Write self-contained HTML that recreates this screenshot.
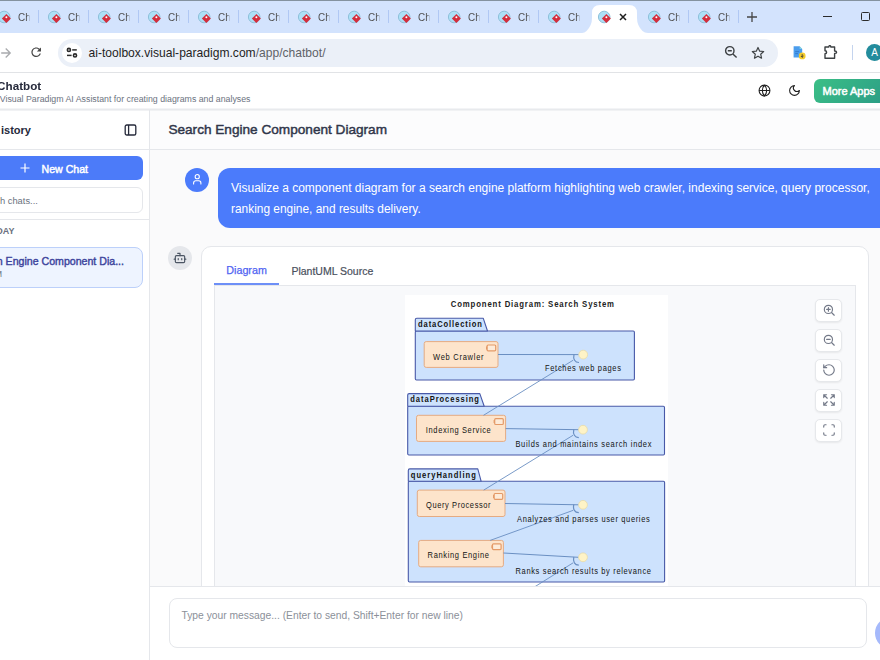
<!DOCTYPE html>
<html><head><meta charset="utf-8">
<style>
*{box-sizing:border-box;margin:0;padding:0}
html,body{width:880px;height:660px;overflow:hidden;background:#fff;font-family:"Liberation Sans",sans-serif;position:relative}
.a{position:absolute}
.t{position:absolute;line-height:1;white-space:nowrap}
</style></head><body>
<div class="a" style="left:0;top:0;width:880px;height:1px;background:#84929f"></div>
<div class="a" style="left:0;top:1px;width:880px;height:32px;background:#d3e3fd"></div>
<svg class="a" style="left:582px;top:4px" width="66" height="30" viewBox="0 0 66 30">
<path d="M0 29 Q2.5 29 4.5 27 Q10 21.5 10 14 L10 9 Q10 1 18 1 L47 1 Q55 1 55 9 L55 14 Q55 21.5 60.5 27 Q62.5 29 66 29 L66 30 L0 30 Z" fill="#fff"/></svg>
<svg class="a" style="left:-3.2px;top:9.5px" width="14" height="14" viewBox="0 0 14 14"><circle cx="7.2" cy="7" r="5.8" fill="#ade0f7" stroke="#88bcd6" stroke-width="0.9"/><path d="M9.4 4.1 L13.9 8.6 L9.4 13.1 L4.9 8.6 Z" fill="#d42d3c"/><circle cx="9.4" cy="7.2" r="1.0" fill="#fff"/></svg>
<div class="t" style="left:17.70px;top:11.79px;font-size:11px;color:#505050;transform:scaleX(0.9);transform-origin:left center;width:14.5px;overflow:hidden;-webkit-mask-image:linear-gradient(90deg,#000 66%,transparent 92%);">Ch</div>
<div class="a" style="left:37.9px;top:10px;width:1.6px;height:13px;background:#b0c8f4"></div>
<svg class="a" style="left:46.8px;top:9.5px" width="14" height="14" viewBox="0 0 14 14"><circle cx="7.2" cy="7" r="5.8" fill="#ade0f7" stroke="#88bcd6" stroke-width="0.9"/><path d="M9.4 4.1 L13.9 8.6 L9.4 13.1 L4.9 8.6 Z" fill="#d42d3c"/><circle cx="9.4" cy="7.2" r="1.0" fill="#fff"/></svg>
<div class="t" style="left:67.70px;top:11.79px;font-size:11px;color:#505050;transform:scaleX(0.9);transform-origin:left center;width:14.5px;overflow:hidden;-webkit-mask-image:linear-gradient(90deg,#000 66%,transparent 92%);">Ch</div>
<div class="a" style="left:87.9px;top:10px;width:1.6px;height:13px;background:#b0c8f4"></div>
<svg class="a" style="left:96.8px;top:9.5px" width="14" height="14" viewBox="0 0 14 14"><circle cx="7.2" cy="7" r="5.8" fill="#ade0f7" stroke="#88bcd6" stroke-width="0.9"/><path d="M9.4 4.1 L13.9 8.6 L9.4 13.1 L4.9 8.6 Z" fill="#d42d3c"/><circle cx="9.4" cy="7.2" r="1.0" fill="#fff"/></svg>
<div class="t" style="left:117.70px;top:11.79px;font-size:11px;color:#505050;transform:scaleX(0.9);transform-origin:left center;width:14.5px;overflow:hidden;-webkit-mask-image:linear-gradient(90deg,#000 66%,transparent 92%);">Ch</div>
<div class="a" style="left:137.9px;top:10px;width:1.6px;height:13px;background:#b0c8f4"></div>
<svg class="a" style="left:146.8px;top:9.5px" width="14" height="14" viewBox="0 0 14 14"><circle cx="7.2" cy="7" r="5.8" fill="#ade0f7" stroke="#88bcd6" stroke-width="0.9"/><path d="M9.4 4.1 L13.9 8.6 L9.4 13.1 L4.9 8.6 Z" fill="#d42d3c"/><circle cx="9.4" cy="7.2" r="1.0" fill="#fff"/></svg>
<div class="t" style="left:167.70px;top:11.79px;font-size:11px;color:#505050;transform:scaleX(0.9);transform-origin:left center;width:14.5px;overflow:hidden;-webkit-mask-image:linear-gradient(90deg,#000 66%,transparent 92%);">Ch</div>
<div class="a" style="left:187.9px;top:10px;width:1.6px;height:13px;background:#b0c8f4"></div>
<svg class="a" style="left:196.8px;top:9.5px" width="14" height="14" viewBox="0 0 14 14"><circle cx="7.2" cy="7" r="5.8" fill="#ade0f7" stroke="#88bcd6" stroke-width="0.9"/><path d="M9.4 4.1 L13.9 8.6 L9.4 13.1 L4.9 8.6 Z" fill="#d42d3c"/><circle cx="9.4" cy="7.2" r="1.0" fill="#fff"/></svg>
<div class="t" style="left:217.70px;top:11.79px;font-size:11px;color:#505050;transform:scaleX(0.9);transform-origin:left center;width:14.5px;overflow:hidden;-webkit-mask-image:linear-gradient(90deg,#000 66%,transparent 92%);">Ch</div>
<div class="a" style="left:237.9px;top:10px;width:1.6px;height:13px;background:#b0c8f4"></div>
<svg class="a" style="left:246.8px;top:9.5px" width="14" height="14" viewBox="0 0 14 14"><circle cx="7.2" cy="7" r="5.8" fill="#ade0f7" stroke="#88bcd6" stroke-width="0.9"/><path d="M9.4 4.1 L13.9 8.6 L9.4 13.1 L4.9 8.6 Z" fill="#d42d3c"/><circle cx="9.4" cy="7.2" r="1.0" fill="#fff"/></svg>
<div class="t" style="left:267.70px;top:11.79px;font-size:11px;color:#505050;transform:scaleX(0.9);transform-origin:left center;width:14.5px;overflow:hidden;-webkit-mask-image:linear-gradient(90deg,#000 66%,transparent 92%);">Ch</div>
<div class="a" style="left:287.9px;top:10px;width:1.6px;height:13px;background:#b0c8f4"></div>
<svg class="a" style="left:296.8px;top:9.5px" width="14" height="14" viewBox="0 0 14 14"><circle cx="7.2" cy="7" r="5.8" fill="#ade0f7" stroke="#88bcd6" stroke-width="0.9"/><path d="M9.4 4.1 L13.9 8.6 L9.4 13.1 L4.9 8.6 Z" fill="#d42d3c"/><circle cx="9.4" cy="7.2" r="1.0" fill="#fff"/></svg>
<div class="t" style="left:317.70px;top:11.79px;font-size:11px;color:#505050;transform:scaleX(0.9);transform-origin:left center;width:14.5px;overflow:hidden;-webkit-mask-image:linear-gradient(90deg,#000 66%,transparent 92%);">Ch</div>
<div class="a" style="left:337.9px;top:10px;width:1.6px;height:13px;background:#b0c8f4"></div>
<svg class="a" style="left:346.8px;top:9.5px" width="14" height="14" viewBox="0 0 14 14"><circle cx="7.2" cy="7" r="5.8" fill="#ade0f7" stroke="#88bcd6" stroke-width="0.9"/><path d="M9.4 4.1 L13.9 8.6 L9.4 13.1 L4.9 8.6 Z" fill="#d42d3c"/><circle cx="9.4" cy="7.2" r="1.0" fill="#fff"/></svg>
<div class="t" style="left:367.70px;top:11.79px;font-size:11px;color:#505050;transform:scaleX(0.9);transform-origin:left center;width:14.5px;overflow:hidden;-webkit-mask-image:linear-gradient(90deg,#000 66%,transparent 92%);">Ch</div>
<div class="a" style="left:387.9px;top:10px;width:1.6px;height:13px;background:#b0c8f4"></div>
<svg class="a" style="left:396.8px;top:9.5px" width="14" height="14" viewBox="0 0 14 14"><circle cx="7.2" cy="7" r="5.8" fill="#ade0f7" stroke="#88bcd6" stroke-width="0.9"/><path d="M9.4 4.1 L13.9 8.6 L9.4 13.1 L4.9 8.6 Z" fill="#d42d3c"/><circle cx="9.4" cy="7.2" r="1.0" fill="#fff"/></svg>
<div class="t" style="left:417.70px;top:11.79px;font-size:11px;color:#505050;transform:scaleX(0.9);transform-origin:left center;width:14.5px;overflow:hidden;-webkit-mask-image:linear-gradient(90deg,#000 66%,transparent 92%);">Ch</div>
<div class="a" style="left:437.9px;top:10px;width:1.6px;height:13px;background:#b0c8f4"></div>
<svg class="a" style="left:446.8px;top:9.5px" width="14" height="14" viewBox="0 0 14 14"><circle cx="7.2" cy="7" r="5.8" fill="#ade0f7" stroke="#88bcd6" stroke-width="0.9"/><path d="M9.4 4.1 L13.9 8.6 L9.4 13.1 L4.9 8.6 Z" fill="#d42d3c"/><circle cx="9.4" cy="7.2" r="1.0" fill="#fff"/></svg>
<div class="t" style="left:467.70px;top:11.79px;font-size:11px;color:#505050;transform:scaleX(0.9);transform-origin:left center;width:14.5px;overflow:hidden;-webkit-mask-image:linear-gradient(90deg,#000 66%,transparent 92%);">Ch</div>
<div class="a" style="left:487.9px;top:10px;width:1.6px;height:13px;background:#b0c8f4"></div>
<svg class="a" style="left:496.8px;top:9.5px" width="14" height="14" viewBox="0 0 14 14"><circle cx="7.2" cy="7" r="5.8" fill="#ade0f7" stroke="#88bcd6" stroke-width="0.9"/><path d="M9.4 4.1 L13.9 8.6 L9.4 13.1 L4.9 8.6 Z" fill="#d42d3c"/><circle cx="9.4" cy="7.2" r="1.0" fill="#fff"/></svg>
<div class="t" style="left:517.70px;top:11.79px;font-size:11px;color:#505050;transform:scaleX(0.9);transform-origin:left center;width:14.5px;overflow:hidden;-webkit-mask-image:linear-gradient(90deg,#000 66%,transparent 92%);">Ch</div>
<div class="a" style="left:537.9px;top:10px;width:1.6px;height:13px;background:#b0c8f4"></div>
<svg class="a" style="left:546.8px;top:9.5px" width="14" height="14" viewBox="0 0 14 14"><circle cx="7.2" cy="7" r="5.8" fill="#ade0f7" stroke="#88bcd6" stroke-width="0.9"/><path d="M9.4 4.1 L13.9 8.6 L9.4 13.1 L4.9 8.6 Z" fill="#d42d3c"/><circle cx="9.4" cy="7.2" r="1.0" fill="#fff"/></svg>
<div class="t" style="left:567.70px;top:11.79px;font-size:11px;color:#505050;transform:scaleX(0.9);transform-origin:left center;width:14.5px;overflow:hidden;-webkit-mask-image:linear-gradient(90deg,#000 66%,transparent 92%);">Ch</div>
<svg class="a" style="left:596.8px;top:9.5px" width="14" height="14" viewBox="0 0 14 14"><circle cx="7.2" cy="7" r="5.8" fill="#ade0f7" stroke="#88bcd6" stroke-width="0.9"/><path d="M9.4 4.1 L13.9 8.6 L9.4 13.1 L4.9 8.6 Z" fill="#d42d3c"/><circle cx="9.4" cy="7.2" r="1.0" fill="#fff"/></svg>
<svg class="a" style="left:618.5px;top:12.5px" width="8" height="8" viewBox="0 0 8 8"><path d="M1 1L7 7M7 1L1 7" stroke="#1f1f1f" stroke-width="1.5"/></svg>
<svg class="a" style="left:646.8px;top:9.5px" width="14" height="14" viewBox="0 0 14 14"><circle cx="7.2" cy="7" r="5.8" fill="#ade0f7" stroke="#88bcd6" stroke-width="0.9"/><path d="M9.4 4.1 L13.9 8.6 L9.4 13.1 L4.9 8.6 Z" fill="#d42d3c"/><circle cx="9.4" cy="7.2" r="1.0" fill="#fff"/></svg>
<div class="t" style="left:667.70px;top:11.79px;font-size:11px;color:#505050;transform:scaleX(0.9);transform-origin:left center;width:14.5px;overflow:hidden;-webkit-mask-image:linear-gradient(90deg,#000 66%,transparent 92%);">Ch</div>
<div class="a" style="left:687.9px;top:10px;width:1.6px;height:13px;background:#b0c8f4"></div>
<svg class="a" style="left:696.8px;top:9.5px" width="14" height="14" viewBox="0 0 14 14"><circle cx="7.2" cy="7" r="5.8" fill="#ade0f7" stroke="#88bcd6" stroke-width="0.9"/><path d="M9.4 4.1 L13.9 8.6 L9.4 13.1 L4.9 8.6 Z" fill="#d42d3c"/><circle cx="9.4" cy="7.2" r="1.0" fill="#fff"/></svg>
<div class="t" style="left:717.70px;top:11.79px;font-size:11px;color:#505050;transform:scaleX(0.9);transform-origin:left center;width:14.5px;overflow:hidden;-webkit-mask-image:linear-gradient(90deg,#000 66%,transparent 92%);">Ch</div>
<div class="a" style="left:737.9px;top:10px;width:1.6px;height:13px;background:#b0c8f4"></div>
<svg class="a" style="left:746px;top:11px" width="12" height="12" viewBox="0 0 12 12"><path d="M6 1V11M1 6H11" stroke="#474747" stroke-width="1.3"/></svg>
<div class="a" style="left:822.5px;top:16px;width:9.5px;height:1.2px;background:#2b2b2b"></div>
<div class="a" style="left:861px;top:12.3px;width:9px;height:9px;border:1.3px solid #2b2b2b;border-radius:1.5px"></div>
<div class="a" style="left:0;top:33px;width:880px;height:39px;background:#fff"></div>
<div class="a" style="left:0;top:72px;width:880px;height:1px;background:#e1e3e6"></div>
<svg class="a" style="left:0px;top:45.5px" width="14" height="14" viewBox="0 0 14 14"><path d="M1.2 7H10.2M5.7 2.5L10.2 7L5.7 11.5" fill="none" stroke="#a9abae" stroke-width="1.35"/></svg>
<svg class="a" style="left:28.8px;top:45.4px" width="14.4" height="14.4" viewBox="0 0 24 24"><path fill="#474747" d="M17.65 6.35C16.2 4.9 14.21 4 12 4c-4.42 0-7.99 3.58-7.99 8s3.57 8 7.99 8c3.73 0 6.84-2.55 7.73-6h-2.08c-.82 2.33-3.04 4-5.650 4-3.31 0-6-2.69-6-6s2.69-6 6-6c1.66 0 3.14.69 4.22 1.78L13 11h7V4l-2.35 2.35z"/></svg>
<div class="a" style="left:58px;top:38.5px;width:720px;height:28px;border-radius:14px;background:#ebf0f8"></div>
<div class="a" style="left:61.5px;top:42.5px;width:20px;height:20px;border-radius:10px;background:#fff"></div>
<svg class="a" style="left:65px;top:46px" width="13" height="13" viewBox="0 0 13 13"><circle cx="3.9" cy="3.9" r="1.55" fill="none" stroke="#2b2b2b" stroke-width="1.6"/><path d="M7.2 3.9H11.8" stroke="#2b2b2b" stroke-width="1.5"/><circle cx="10" cy="9.4" r="1.55" fill="none" stroke="#2b2b2b" stroke-width="1.6"/><path d="M2 9.4H6.6" stroke="#2b2b2b" stroke-width="1.5"/></svg>
<div class="t" style="left:88.50px;top:46.77px;font-size:12.08px;color:#1f1f1f;">ai-toolbox.visual-paradigm.com<span style="color:#5f6368">/app/chatbot/</span></div>
<svg class="a" style="left:724px;top:45.3px" width="14" height="14" viewBox="0 0 14 14"><circle cx="5.8" cy="5.8" r="4.2" fill="none" stroke="#3c4043" stroke-width="1.4"/><path d="M3.8 5.8H7.8M8.9 8.9L12.6 12.6" stroke="#3c4043" stroke-width="1.4"/></svg>
<svg class="a" style="left:751px;top:45.6px" width="14" height="14" viewBox="0 0 24 24"><path d="M12 2.5l2.9 6.3 6.9.7-5.2 4.6 1.5 6.8L12 17.4l-6.1 3.5 1.5-6.8L2.2 9.5l6.9-.7z" fill="none" stroke="#3c4043" stroke-width="2" stroke-linejoin="round"/></svg>
<svg class="a" style="left:792px;top:44px" width="16" height="17" viewBox="0 0 16 17"><path d="M1.6 2.3H7.6L10.2 4.9V13.5H1.6Z" fill="#4b9ded"/><path d="M7.6 2.3V4.9H10.2Z" fill="#86d3df"/><path d="M3.2 7.6H7.2M3.2 9.6H6" stroke="#2f74c6" stroke-width="0.8"/><circle cx="10.2" cy="11.9" r="3.4" fill="#f3cb2c"/><path d="M10.2 10.2V13.2M8.9 12L10.2 13.3L11.5 12" fill="none" stroke="#3a3a3a" stroke-width="0.9"/></svg>
<svg class="a" style="left:823.5px;top:45px" width="15" height="14" viewBox="0 0 15 14"><path d="M1 2H4.8Q4.8 0.6 5.8 0.6Q6.8 0.6 6.8 2H10.6V6Q12.6 6 12.6 7.2Q12.6 8.4 10.6 8.4V13.2H1V8.7Q2.6 8.7 2.6 7.2Q2.6 5.7 1 5.7Z" fill="none" stroke="#3c4043" stroke-width="1.4" stroke-linejoin="round"/></svg>
<div class="a" style="left:851.5px;top:45px;width:1px;height:15px;background:#c4d4ee"></div>
<div class="a" style="left:866.2px;top:44px;width:17px;height:17px;border-radius:50%;background:#238c9c"></div>
<div class="t" style="left:871.30px;top:47.53px;font-size:10px;color:#fff;">A</div>
<div class="a" style="left:0;top:73px;width:880px;height:36px;background:#fff"></div>
<div class="a" style="left:0;top:108px;width:880px;height:1px;background:#f3f4f6"></div>
<div class="a" style="left:0;top:109px;width:880px;height:1px;background:#e8eaed"></div>
<div class="a" style="left:0;top:110px;width:880px;height:1px;background:#f1f2f4"></div>
<div class="t" style="right:839.00px;top:80.67px;font-size:10.9px;color:#262a3b;font-weight:bold;transform:scaleX(1.07);transform-origin:right center;">Chatbot</div>
<div class="t" style="right:629.50px;top:94.56px;font-size:8.79px;color:#6b7280;">Visual Paradigm AI Assistant for creating diagrams and analyses</div>
<svg class="a" style="left:757.5px;top:84px" width="13" height="13" viewBox="0 0 24 24"><circle cx="12" cy="12" r="10" fill="none" stroke="#1f1f1f" stroke-width="2"/><path d="M12 2a14.5 14.5 0 0 0 0 20 14.5 14.5 0 0 0 0-20M2 12h20" fill="none" stroke="#1f1f1f" stroke-width="2"/></svg>
<svg class="a" style="left:787.5px;top:84px" width="13" height="13" viewBox="0 0 24 24"><path d="M12 3a6 6 0 0 0 9 9 9 9 0 1 1-9-9Z" fill="none" stroke="#1f1f1f" stroke-width="2" stroke-linejoin="round"/></svg>
<div class="a" style="left:814px;top:79px;width:80px;height:23.5px;border-radius:6px;background:linear-gradient(135deg,#3bbf86,#2a9a86)"></div>
<div class="t" style="left:822.50px;top:86.49px;font-size:11.0px;color:#fff;-webkit-text-stroke:0.5px #fff;">More Apps</div>
<div class="a" style="left:0;top:111px;width:149px;height:549px;background:#fff"></div>
<div class="a" style="left:149px;top:110px;width:1px;height:550px;background:#e5e7eb"></div>
<div class="t" style="right:849.00px;top:125.19px;font-size:11.0px;color:#262a3b;font-weight:bold;transform:scaleX(1.0);transform-origin:right center;">istory</div>
<svg class="a" style="left:123.5px;top:123.5px" width="13" height="12" viewBox="0 0 13 12"><rect x="1.2" y="1" width="10.6" height="10" rx="1.6" fill="none" stroke="#262a3b" stroke-width="1.3"/><path d="M4.6 1V11" stroke="#262a3b" stroke-width="1.3"/></svg>
<div class="a" style="left:0;top:149px;width:149px;height:1px;background:#e5e7eb"></div>
<div class="a" style="left:-40px;top:155.5px;width:183px;height:24px;border-radius:6px;background:#4c7bf9"></div>
<svg class="a" style="left:19.5px;top:162.8px" width="10" height="10" viewBox="0 0 10 10"><path d="M5 0.5V9.5M0.5 5H9.5" stroke="#fff" stroke-width="1.2"/></svg>
<div class="t" style="left:41.50px;top:163.83px;font-size:10.6px;color:#fff;-webkit-text-stroke:0.45px #fff;">New Chat</div>
<div class="a" style="left:-40px;top:186.5px;width:183px;height:26px;border-radius:6px;border:1px solid #e5e7eb;background:#fff"></div>
<div class="t" style="right:842.20px;top:196.91px;font-size:9.32px;color:#6b7280;">Search chats...</div>
<div class="a" style="left:0;top:219px;width:149px;height:1px;background:#e5e7eb"></div>
<div class="t" style="right:865.50px;top:226.98px;font-size:9px;color:#6b7280;font-weight:bold;">TODAY</div>
<div class="a" style="left:-40px;top:247px;width:183px;height:41px;border-radius:8px;border:1px solid #bcd0fa;background:#eef4ff"></div>
<div class="t" style="right:756.00px;top:256.13px;font-size:10.6px;color:#3b439c;-webkit-text-stroke:0.4px #3b439c;">Search Engine Component Dia...</div>
<div class="t" style="right:878.00px;top:270.15px;font-size:8.8px;color:#6b7280;">10:24 PM</div>
<div class="a" style="left:150px;top:111px;width:730px;height:38px;background:#fcfcfd"></div>
<div class="a" style="left:150px;top:149px;width:730px;height:1px;background:#e5e7eb"></div>
<div class="t" style="left:168.40px;top:123.47px;font-size:13.62px;color:#30364a;-webkit-text-stroke:0.45px #30364a;">Search Engine Component Diagram</div>
<div class="a" style="left:150px;top:150px;width:730px;height:436px;background:#fafafb"></div>
<div class="a" style="left:185px;top:168px;width:24px;height:24px;border-radius:50%;background:#4b7bfb"></div>
<svg class="a" style="left:191.2px;top:173.3px" width="12.5" height="12.5" viewBox="0 0 24 24"><path d="M19 21v-2a4 4 0 0 0-4-4H9a4 4 0 0 0-4 4v2" fill="none" stroke="#fff" stroke-width="2.1" stroke-linecap="round"/><circle cx="12" cy="7" r="4" fill="none" stroke="#fff" stroke-width="2.1"/></svg>
<div class="a" style="left:218.2px;top:168px;width:700px;height:60.2px;border-radius:12px;background:#4b7bfb"></div>
<div class="t" style="left:231.00px;top:181.84px;font-size:12px;color:#fff;">Visualize a component diagram for a search engine platform highlighting web crawler, indexing service, query processor,</div>
<div class="t" style="left:231.00px;top:203.91px;font-size:11.92px;color:#fff;">ranking engine, and results delivery.</div>
<div class="a" style="left:168px;top:246px;width:24px;height:24px;border-radius:50%;background:#e5e7eb"></div>
<svg class="a" style="left:173px;top:251px" width="14" height="14" viewBox="0 0 24 24"><path d="M12 8V4H8" fill="none" stroke="#4b5563" stroke-width="2" stroke-linecap="round" stroke-linejoin="round"/><rect width="16" height="12" x="4" y="8" rx="2" fill="none" stroke="#4b5563" stroke-width="2"/><path d="M2 14h2M20 14h2M15 13v2M9 13v2" stroke="#4b5563" stroke-width="2" stroke-linecap="round"/></svg>
<div class="a" style="left:201px;top:246px;width:668px;height:400px;border-radius:10px;border:1px solid #e5e7eb;background:#fff"></div>
<div class="t" style="left:226.30px;top:265.41px;font-size:10.74px;color:#4f63f2;-webkit-text-stroke:0.25px #4f63f2;">Diagram</div>
<div class="t" style="left:291.40px;top:265.60px;font-size:10.51px;color:#4a505d;-webkit-text-stroke:0.2px #4a505d;">PlantUML Source</div>
<div class="a" style="left:214px;top:282.5px;width:65px;height:2px;background:#6d8ff7"></div>
<div class="a" style="left:214px;top:284.5px;width:642px;height:320px;border:1px solid #e5e7eb;background:#f8f9fb"></div>
<div class="a" style="left:405px;top:295px;width:263px;height:300px;background:#fff"></div>
<svg class="a" style="left:405px;top:295px" width="263" height="290.5" viewBox="405 295 263 290.5" font-family="Liberation Sans, sans-serif">
<g transform="translate(0 307.3) scale(1 1.08) translate(0 -307.3)"><text x="450.8" y="307.3" font-size="7.8" font-weight="bold" fill="#222" textLength="163.2" lengthAdjust="spacing">Component Diagram: Search System</text></g>
<rect x="415.3" y="331" width="219.09999999999997" height="49" rx="1.2" fill="#cde2fd" stroke="#4859a8" stroke-width="1.1"/>
<path d="M415.3 331 L415.3 319.8 Q415.3 318.3 416.8 318.3 L483.3 318.3 L487.5 331 Z" fill="#cde2fd" stroke="#4859a8" stroke-width="1.1" stroke-linejoin="round"/>
<g transform="translate(0 327) scale(1 1.08) translate(0 -327)"><text x="418" y="327" font-size="7.6" font-weight="bold" fill="#111" textLength="63.9" lengthAdjust="spacing">dataCollection</text></g>
<rect x="407.7" y="406.3" width="256.8" height="48.69999999999999" rx="1.2" fill="#cde2fd" stroke="#4859a8" stroke-width="1.1"/>
<path d="M407.7 406.3 L407.7 395.1 Q407.7 393.6 409.2 393.6 L479.8 393.6 L484.2 406.3 Z" fill="#cde2fd" stroke="#4859a8" stroke-width="1.1" stroke-linejoin="round"/>
<g transform="translate(0 402.4) scale(1 1.08) translate(0 -402.4)"><text x="410.3" y="402.4" font-size="7.6" font-weight="bold" fill="#111" textLength="68.7" lengthAdjust="spacing">dataProcessing</text></g>
<rect x="408.3" y="481.2" width="256.3" height="100.80000000000001" rx="1.2" fill="#cde2fd" stroke="#4859a8" stroke-width="1.1"/>
<path d="M408.3 481.2 L408.3 470.4 Q408.3 468.9 409.8 468.9 L477.8 468.9 L481.1 481.2 Z" fill="#cde2fd" stroke="#4859a8" stroke-width="1.1" stroke-linejoin="round"/>
<g transform="translate(0 477.6) scale(1 1.08) translate(0 -477.6)"><text x="410.8" y="477.6" font-size="7.6" font-weight="bold" fill="#111" textLength="65.0" lengthAdjust="spacing">queryHandling</text></g>
<rect x="424.2" y="341.6" width="73.80000000000001" height="25.799999999999955" rx="2" fill="#fde4cb" stroke="#e5ab82" stroke-width="1"/>
<rect x="487.1" y="345.0" width="8.6" height="5.8" rx="1" fill="#fdebd9" stroke="#e49a68" stroke-width="1.2"/>
<path d="M486.6 346.40000000000003V349.40000000000003" stroke="#e49a68" stroke-width="1.2"/>
<g transform="translate(0 360.5) scale(1 1.12) translate(0 -360.5)"><text x="433" y="360.5" font-size="7.5" fill="#141414" textLength="50.6" lengthAdjust="spacing">Web Crawler</text></g>
<rect x="416.5" y="415.3" width="89.10000000000002" height="26.099999999999966" rx="2" fill="#fde4cb" stroke="#e5ab82" stroke-width="1"/>
<rect x="494.70000000000005" y="418.7" width="8.6" height="5.8" rx="1" fill="#fdebd9" stroke="#e49a68" stroke-width="1.2"/>
<path d="M494.20000000000005 420.1V423.1" stroke="#e49a68" stroke-width="1.2"/>
<g transform="translate(0 433.4) scale(1 1.12) translate(0 -433.4)"><text x="425.8" y="433.4" font-size="7.5" fill="#141414" textLength="65.0" lengthAdjust="spacing">Indexing Service</text></g>
<rect x="417.3" y="490.1" width="87.69999999999999" height="26.399999999999977" rx="2" fill="#fde4cb" stroke="#e5ab82" stroke-width="1"/>
<rect x="494.1" y="493.5" width="8.6" height="5.8" rx="1" fill="#fdebd9" stroke="#e49a68" stroke-width="1.2"/>
<path d="M493.6 494.90000000000003V497.90000000000003" stroke="#e49a68" stroke-width="1.2"/>
<g transform="translate(0 508.3) scale(1 1.12) translate(0 -508.3)"><text x="426" y="508.3" font-size="7.5" fill="#141414" textLength="64.6" lengthAdjust="spacing">Query Processor</text></g>
<rect x="418.7" y="540.4" width="84.69999999999999" height="26.399999999999977" rx="2" fill="#fde4cb" stroke="#e5ab82" stroke-width="1"/>
<rect x="492.5" y="543.8" width="8.6" height="5.8" rx="1" fill="#fdebd9" stroke="#e49a68" stroke-width="1.2"/>
<path d="M492.0 545.1999999999999V548.1999999999999" stroke="#e49a68" stroke-width="1.2"/>
<g transform="translate(0 558.5) scale(1 1.12) translate(0 -558.5)"><text x="427.6" y="558.5" font-size="7.5" fill="#141414" textLength="61.4" lengthAdjust="spacing">Ranking Engine</text></g>
<path d="M498 354.5 L578.7 354.6" stroke="#6a8fc2" stroke-width="1" fill="none"/>
<path d="M573.2 360.20000000000005 L483.5 415.3" stroke="#6a8fc2" stroke-width="0.9" fill="none"/>
<path d="M574.0 354.3 C572.9000000000001 359.1 574.9000000000001 362.5 579.0 362.5" stroke="#6a8fc2" stroke-width="1.2" fill="none"/>
<circle cx="583.2" cy="354.6" r="4.4" fill="#fef3c6" stroke="#e6d9a2" stroke-width="0.7"/>
<g transform="translate(0 371.5) scale(1 1.12) translate(0 -371.5)"><text x="545" y="371.5" font-size="7.5" fill="#141414" textLength="76.0" lengthAdjust="spacing">Fetches web pages</text></g>
<path d="M505.6 428.6 L578.5 429.7" stroke="#6a8fc2" stroke-width="1" fill="none"/>
<path d="M573 435.3 L483.7 490.1" stroke="#6a8fc2" stroke-width="0.9" fill="none"/>
<path d="M573.8 429.4 C572.7 434.2 574.7 437.59999999999997 578.8 437.59999999999997" stroke="#6a8fc2" stroke-width="1.2" fill="none"/>
<circle cx="583" cy="429.7" r="4.4" fill="#fef3c6" stroke="#e6d9a2" stroke-width="0.7"/>
<g transform="translate(0 446.7) scale(1 1.12) translate(0 -446.7)"><text x="515.4" y="446.7" font-size="7.5" fill="#141414" textLength="136.1" lengthAdjust="spacing">Builds and maintains search index</text></g>
<path d="M505 503.5 L578.5 504.8" stroke="#6a8fc2" stroke-width="1" fill="none"/>
<path d="M573 510.40000000000003 L490.2 540.4" stroke="#6a8fc2" stroke-width="0.9" fill="none"/>
<path d="M573.8 504.5 C572.7 509.3 574.7 512.7 578.8 512.7" stroke="#6a8fc2" stroke-width="1.2" fill="none"/>
<circle cx="583" cy="504.8" r="4.4" fill="#fef3c6" stroke="#e6d9a2" stroke-width="0.7"/>
<g transform="translate(0 521.8) scale(1 1.12) translate(0 -521.8)"><text x="517" y="521.8" font-size="7.5" fill="#141414" textLength="132.7" lengthAdjust="spacing">Analyzes and parses user queries</text></g>
<path d="M503.4 553 L578.5 557.3" stroke="#6a8fc2" stroke-width="1" fill="none"/>
<path d="M573 562.9 L520 596" stroke="#6a8fc2" stroke-width="0.9" fill="none"/>
<path d="M573.8 557.0 C572.7 561.8 574.7 565.1999999999999 578.8 565.1999999999999" stroke="#6a8fc2" stroke-width="1.2" fill="none"/>
<circle cx="583" cy="557.3" r="4.4" fill="#fef3c6" stroke="#e6d9a2" stroke-width="0.7"/>
<g transform="translate(0 574.3) scale(1 1.12) translate(0 -574.3)"><text x="515.5" y="574.3" font-size="7.5" fill="#141414" textLength="135.5" lengthAdjust="spacing">Ranks search results by relevance</text></g>
</svg>
<div class="a" style="left:814.6px;top:299px;width:27.8px;height:22.5px;border-radius:5px;border:1px solid #e6e8eb;background:#fff;box-shadow:0 1px 2px rgba(0,0,0,.07)"></div>
<svg class="a" style="left:821.5px;top:302.8px" width="14" height="14" viewBox="0 0 24 24" fill="none" stroke="#737988" stroke-width="2" stroke-linecap="round" stroke-linejoin="round"><circle cx="11" cy="11" r="7"/><path d="m21 21-4.3-4.3M11 8v6M8 11h6"/></svg>
<div class="a" style="left:814.6px;top:329px;width:27.8px;height:22.5px;border-radius:5px;border:1px solid #e6e8eb;background:#fff;box-shadow:0 1px 2px rgba(0,0,0,.07)"></div>
<svg class="a" style="left:821.5px;top:332.8px" width="14" height="14" viewBox="0 0 24 24" fill="none" stroke="#737988" stroke-width="2" stroke-linecap="round" stroke-linejoin="round"><circle cx="11" cy="11" r="7"/><path d="m21 21-4.3-4.3M8 11h6"/></svg>
<div class="a" style="left:814.6px;top:359px;width:27.8px;height:22.5px;border-radius:5px;border:1px solid #e6e8eb;background:#fff;box-shadow:0 1px 2px rgba(0,0,0,.07)"></div>
<svg class="a" style="left:821.5px;top:362.8px" width="14" height="14" viewBox="0 0 24 24" fill="none" stroke="#737988" stroke-width="2" stroke-linecap="round" stroke-linejoin="round"><path d="M3 12a9 9 0 1 0 9-9 9.75 9.75 0 0 0-6.74 2.74L3 8"/><path d="M3 3v5h5"/></svg>
<div class="a" style="left:814.6px;top:389px;width:27.8px;height:22.5px;border-radius:5px;border:1px solid #e6e8eb;background:#fff;box-shadow:0 1px 2px rgba(0,0,0,.07)"></div>
<svg class="a" style="left:821.5px;top:392.8px" width="14" height="14" viewBox="0 0 24 24" fill="none" stroke="#737988" stroke-width="2" stroke-linecap="round" stroke-linejoin="round"><path d="m21 21-6-6m6 6v-4.8m0 4.8h-4.8M3 16.2V21m0 0h4.8M3 21l6-6M21 7.8V3m0 0h-4.8M21 3l-6 6M3 7.8V3m0 0h4.8M3 3l6 6"/></svg>
<div class="a" style="left:814.6px;top:419px;width:27.8px;height:22.5px;border-radius:5px;border:1px solid #e6e8eb;background:#fff;box-shadow:0 1px 2px rgba(0,0,0,.07)"></div>
<svg class="a" style="left:821.5px;top:422.8px" width="14" height="14" viewBox="0 0 24 24" fill="none" stroke="#737988" stroke-width="2" stroke-linecap="round" stroke-linejoin="round"><path d="M3 7V5a2 2 0 0 1 2-2h2M17 3h2a2 2 0 0 1 2 2v2M21 17v2a2 2 0 0 1-2 2h-2M7 21H5a2 2 0 0 1-2-2v-2"/></svg>
<div class="a" style="left:150px;top:586px;width:730px;height:74px;background:#fff"></div>
<div class="a" style="left:150px;top:585.5px;width:730px;height:1px;background:#e5e7eb"></div>
<div class="a" style="left:168.5px;top:598px;width:698px;height:50px;border-radius:8px;border:1px solid #e5e7eb;background:#fff"></div>
<div class="t" style="left:181.50px;top:611.39px;font-size:10.29px;color:#8b9099;">Type your message... (Enter to send, Shift+Enter for new line)</div>
<div class="a" style="left:875px;top:617px;width:32px;height:32px;border-radius:50%;background:#a5b9fb"></div>
</body></html>
